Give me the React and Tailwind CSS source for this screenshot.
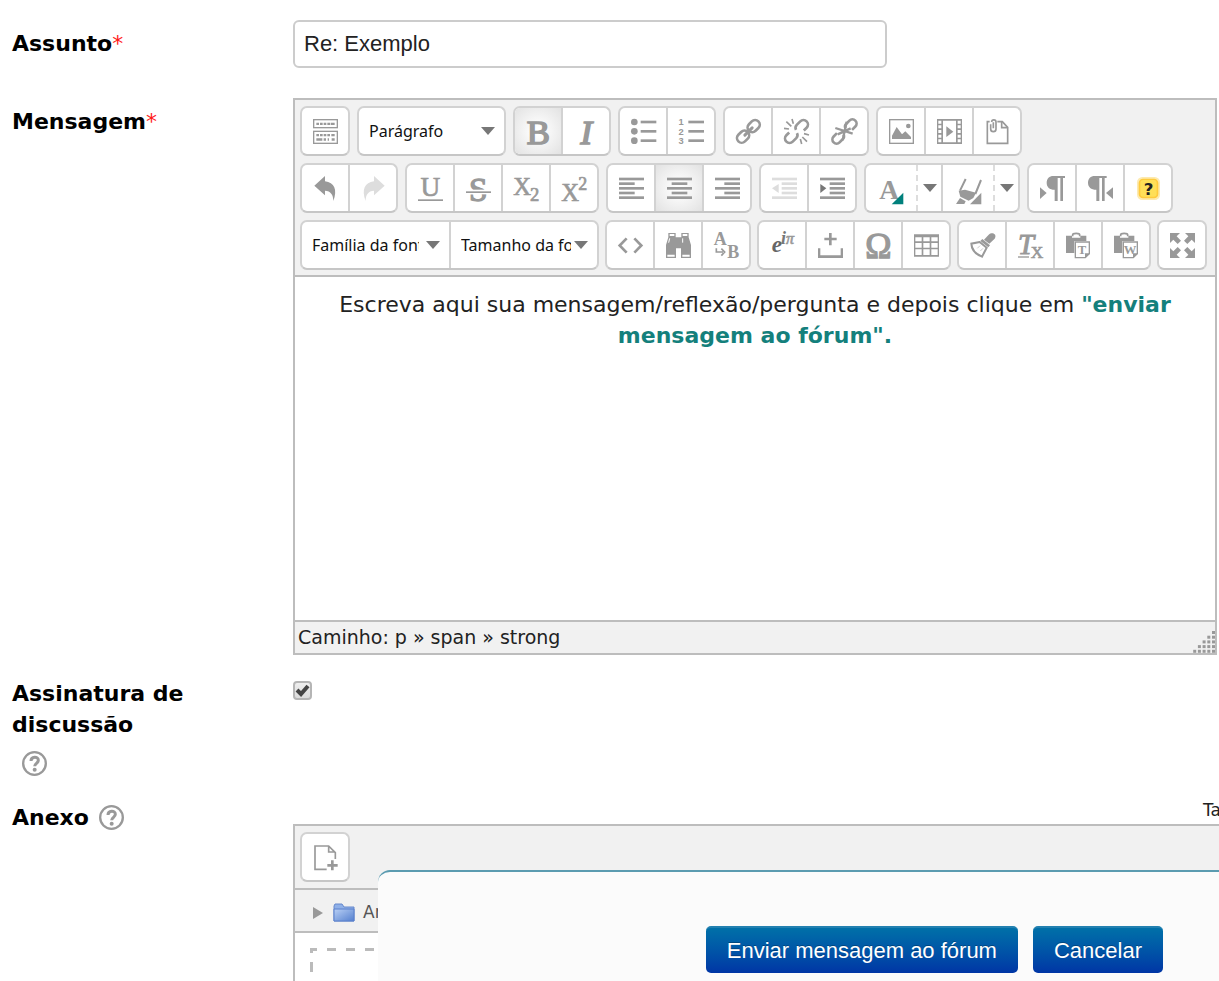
import { useState } from 'react'
import clsx from 'clsx'

const SERIF = '"Liberation Serif", serif'

function Icon({ children, color = '#999', className }) {
  return (
    <svg viewBox="0 0 75 75" className={clsx('w-[25px] h-[25px] shrink-0 overflow-visible', className)} fill={color} stroke="none" aria-hidden="true">
      {children}
    </svg>
  )
}

function Glyph({ x = 37, y, size, bold, italic, anchor = 'middle', fill = '#999', weight = 2, children }) {
  return (
    <text x={x} y={y} fontSize={size} fontFamily={SERIF} fontWeight={bold ? 700 : 400} fontStyle={italic ? 'italic' : 'normal'} textAnchor={anchor} fill={fill} stroke={fill} strokeWidth={bold ? 0 : weight}>
      {children}
    </text>
  )
}

// horizontal text lines: [x, width] for each row
function Lines({ rows }) {
  return rows.map(([x, w], i) => <rect key={i} x={x} y={5 + i * 14} width={w} height="8" />)
}

function Caret() {
  return (
    <svg viewBox="0 0 14 8" className="w-[14px] h-2 shrink-0" fill="#777" aria-hidden="true">
      <path d="M0 0H14L7 8Z" />
    </svg>
  )
}

const icons = {
  toggle: (
    <Icon>
      <g fill="none" stroke="#999" strokeWidth="4">
        <rect x="2" y="2" width="71" height="24" />
        <rect x="2" y="37" width="71" height="36" />
      </g>
      <path d="M10 11h8v7h-8zM21 11h8v7h-8zM32 11h8v7h-8zM43 11h8v7h-8zM53 11h12v7H53zM10 45h8v7h-8zM21 45h8v7h-8zM32 45h8v7h-8zM43 45h8v7h-8zM55 45h10v7H55zM10 58h18v7H10zM32 58h7v7h-7zM44 58h4v7h-4zM56 58h9v7h-9z" />
    </Icon>
  ),
  bold: <Icon><Glyph y="75" size="104" weight={5}>B</Glyph></Icon>,
  italic: <Icon><Glyph y="75" size="104" italic weight={5}>I</Glyph></Icon>,
  bullets: (
    <Icon>
      {[9, 37, 65].map((y) => (
        <g key={y}>
          <circle cx="10" cy={y} r="10" />
          <rect x="29" y={y - 4} width="47" height="8" />
        </g>
      ))}
    </Icon>
  ),
  numbers: (
    <Icon>
      {[9, 37, 65].map((y, i) => (
        <g key={y}>
          <text x="6" y={y + 10} fontSize="28" fontWeight="700" fontFamily='"Liberation Sans", sans-serif' textAnchor="middle">{i + 1}</text>
          <rect x="28" y={y - 4} width="47" height="8" />
        </g>
      ))}
    </Icon>
  ),
  link: (
    <Icon>
      <g fill="none" stroke="#999" strokeWidth="8" transform="rotate(-45 37.5 37.5)">
        <rect x="-5" y="23" width="40" height="28" rx="14" />
        <rect x="40" y="23" width="40" height="28" rx="14" />
        <path d="M22 37.500H53" strokeLinecap="round" strokeWidth="9" />
      </g>
    </Icon>
  ),
  unlink: (
    <Icon>
      <g fill="none" stroke="#999" strokeWidth="8" transform="rotate(-45 37.5 37.5)">
        <path d="M20 24H8a13.500 13.500 0 0 0 0 27H23a13 13 0 0 0 12 -9" />
        <path d="M55 51H67a13.500 13.500 0 0 0 0 -27H52a13 13 0 0 0 -12 9" />
      </g>
      <path d="M24 0L28 14M7 8L22 22M0 28L15 30M49 60L53 75M55 54L69 68M60 44L75 48" fill="none" stroke="#999" strokeWidth="5" />
    </Icon>
  ),
  noAutolink: (
    <Icon>
      <g fill="none" stroke="#999" strokeWidth="8" transform="rotate(-45 37.5 37.5)">
        <path d="M18 25H4a12 12 0 0 0 0 25H18a12 12 0 0 0 11 -8" />
        <path d="M57 50H71a12 12 0 0 0 0 -25H57a12 12 0 0 0 -11 8" />
      </g>
      <path d="M10 27L62 44M44 8L32 64M17 46L56 28" fill="none" stroke="#999" strokeWidth="7" />
    </Icon>
  ),
  image: (
    <Icon>
      <rect x="2" y="2" width="71" height="71" fill="none" stroke="#999" strokeWidth="4" />
      <path d="M9 60V50L23 24L39 46L49 37L66 54V60Z" />
      <circle cx="58" cy="21" r="7" />
    </Icon>
  ),
  movie: (
    <Icon>
      <path fillRule="evenodd" d="M0 0H75V75H0ZM4 5V14H13V5ZM4 19V28H13V19ZM4 33V42H13V33ZM4 47V56H13V47ZM4 61V70H13V61ZM62 5V14H71V5ZM62 19V28H71V19ZM62 33V42H71V33ZM62 47V56H71V47ZM62 61V70H71V61ZM18 5V70H57V5Z" />
      <path d="M28 22L49 38L28 54Z" />
    </Icon>
  ),
  attach: (
    <Icon>
      <g fill="none" stroke="#999" strokeWidth="5">
        <path d="M14 8H7V73H68V25L52 8H37" />
        <path d="M50 8V26H68" />
        <path d="M17 16V30a8 8 0 0 0 16 0V9a6.500 6.500 0 0 0 -13 0M25 28V10" />
      </g>
    </Icon>
  ),
  undo: <Icon><path d="M4 29L36 0V16C64 19 74 42 61 75C61 56 53 45 36 44V58Z" /></Icon>,
  redo: <Icon color="#ddd"><path d="M71 29L39 0V16C11 19 1 42 14 75C14 56 22 45 39 44V58Z" /></Icon>,
  underline: (
    <Icon>
      <Glyph y="60" size="82">U</Glyph>
      <rect x="0" y="70" width="75" height="5" />
    </Icon>
  ),
  strike: (
    <Icon>
      <Glyph y="74" size="100" weight={4}>S</Glyph>
      <rect x="0" y="41" width="75" height="14" fill="#fff" />
      <rect x="0" y="46" width="75" height="5" />
    </Icon>
  ),
  sub: (
    <Icon>
      <Glyph x="-2" y="57" size="74" anchor="start">X</Glyph>
      <Glyph x="48" y="75" size="56" anchor="start">2</Glyph>
    </Icon>
  ),
  sup: (
    <Icon>
      <Glyph x="-2" y="74" size="74" anchor="start">X</Glyph>
      <Glyph x="49" y="41" size="54" anchor="start">2</Glyph>
    </Icon>
  ),
  left: <Icon><Lines rows={[[0, 75], [0, 47], [0, 75], [0, 47], [0, 75]]} /></Icon>,
  center: <Icon><Lines rows={[[0, 75], [14, 47], [0, 75], [14, 47], [0, 75]]} /></Icon>,
  right: <Icon><Lines rows={[[0, 75], [28, 47], [0, 75], [28, 47], [0, 75]]} /></Icon>,
  outdent: (
    <Icon color="#ddd">
      <Lines rows={[[0, 75], [29, 46], [29, 46], [29, 46], [0, 75]]} />
      <path d="M0 37L20 24V51Z" />
    </Icon>
  ),
  indent: (
    <Icon>
      <Lines rows={[[0, 75], [29, 46], [29, 46], [29, 46], [0, 75]]} />
      <path d="M19 37L1 24V51Z" fill="#777" />
    </Icon>
  ),
  color: (
    <Icon>
      <Glyph x="30" y="69" size="82" bold>A</Glyph>
      <path d="M73 50V85H38Z" fill="#00807c" />
    </Icon>
  ),
  highlight: (
    <Icon>
      <path d="M29 9L12 44M75 12L58 54" fill="none" stroke="#999" strokeWidth="6" />
      <path d="M8 44L27 41L60 50L52 66L38 74L13 62Z" />
      <path d="M0 84L12 66L29 76L25 84Z" />
      <path d="M76 50V85H42Z" />
    </Icon>
  ),
  ltr: (
    <Icon>
      <path d="M40 0H75V6H69V75H61V6H53V75H44V41C28 41 20 33 20 20C20 8 28 0 40 0Z" />
      <path d="M0 34L20 51L0 69Z" />
    </Icon>
  ),
  rtl: (
    <Icon>
      <path d="M20 0H56V6H50V75H42V6H34V75H25V41C9 41 0 33 0 20C0 8 8 0 20 0Z" />
      <path d="M75 34L54 51L75 69Z" />
    </Icon>
  ),
  help: (
    <Icon>
      <rect x="3" y="3" width="69" height="69" rx="16" fill="#fdeab0" />
      <rect x="8" y="8" width="59" height="59" rx="13" fill="#ffcb3d" />
      <rect x="13" y="12" width="49" height="50" rx="9" fill="#ffdf57" />
      <text x="38" y="56" fontSize="50" fontWeight="700" fontFamily='"DejaVu Sans", sans-serif' textAnchor="middle" fill="#222">?</text>
    </Icon>
  ),
  code: <Icon><path d="M26 16L5 37.500L26 59M49 16L70 37.500L49 59" fill="none" stroke="#999" strokeWidth="8" /></Icon>,
  find: (
    <Icon>
      <path fillRule="evenodd" d="M7 0H29V13H46V0H68V13L75 36V75H45V46H30V75H0V36L7 13ZM11 3V9H25V3ZM50 3V9H64V3ZM4 65V71H26V65ZM49 65V71H71V65Z" />
      <path d="M8 29L11 16M50 29V16" stroke="#fff" strokeWidth="3" />
    </Icon>
  ),
  replace: (
    <Icon>
      <Glyph x="19" y="36" size="54" bold>A</Glyph>
      <Glyph x="58" y="75" size="54" bold>B</Glyph>
      <path d="M7 46V57H27M22 47L32 57L22 68" fill="none" stroke="#999" strokeWidth="5" />
    </Icon>
  ),
  equation: (
    <Icon>
      <Glyph x="5" y="57" size="70" bold italic anchor="start" fill="#666">e</Glyph>
      <Glyph x="33" y="33" size="54" bold italic anchor="start" fill="#777">i</Glyph>
      <Glyph x="48" y="33" size="48" italic anchor="start">π</Glyph>
    </Icon>
  ),
  nbsp: <Icon><path d="M33 0H41V14H56V22H41V37H33V22H19V14H33ZM0 46H7V67H68V46H75V75H0Z" /></Icon>,
  omega: <Icon><Glyph y="74" size="106" weight={4}>Ω</Glyph></Icon>,
  table: (
    <Icon>
      <path fillRule="evenodd" d="M0 4H75V71H0ZM4 13V25H23V13ZM28 13V25H47V13ZM52 13V25H71V13ZM4 30V44H23V30ZM28 30V44H47V30ZM52 30V44H71V30ZM4 49V66H23V49ZM28 49V66H47V49ZM52 49V66H71V49Z" />
    </Icon>
  ),
  cleanup: (
    <Icon>
      <path d="M42 20L56 5C68 -5 82 5 74 17L58 32Z" />
      <path d="M37 18L60 37L55 43L31 24Z" />
      <path d="M29 27L4 32C5 50 18 64 36 71L50 44Z" fill="none" stroke="#999" strokeWidth="6" />
      <path d="M22 46L30 38M31 54L39 46" stroke="#ccc" strokeWidth="3" />
    </Icon>
  ),
  removeFormat: (
    <Icon>
      <Glyph x="0" y="62" size="86" italic anchor="start" weight={3}>T</Glyph>
      <Glyph x="38" y="75" size="52" anchor="start">X</Glyph>
      <rect x="0" y="70" width="33" height="4" />
    </Icon>
  ),
  pasteText: <Icon><Paste letter="T" /></Icon>,
  pasteWord: <Icon><Paste letter="W" /></Icon>,
  fullscreen: (
    <Icon>
      <path d="M0 0H30L20 10L33 23L23 33L10 20L0 30ZM75 0V30L65 20L52 33L42 23L55 10L45 0ZM0 75V45L10 55L23 42L33 52L20 65L30 75ZM75 75H45L55 65L42 52L52 42L65 55L75 45Z" />
    </Icon>
  ),
  addFile: (
    <Icon>
      <path d="M41 73H6V3H47L67 23V42M47 3V21H64" fill="none" stroke="#999" strokeWidth="5" />
      <path d="M54 46H62V57H74V65H62V76H54V65H43V57H54Z" />
    </Icon>
  ),
}

function Paste({ letter }) {
  return (
    <>
      <path d="M0 8H18V14H43V8H61V24H25V60H0Z" />
      <path d="M20 10V5C20 0 41 0 41 5V10" fill="none" stroke="#999" strokeWidth="5" />
      <path d="M28 27H70V62L58 74H28Z" fill="#fff" stroke="#999" strokeWidth="4" />
      <path d="M57 75V61H71Z" />
      <Glyph x="48" y="62" size="38" bold>{letter}</Glyph>
    </>
  )
}

function Group({ children }) {
  return (
    <div className="flex h-[50px] shrink-0 overflow-hidden rounded-[7px] border-2 border-[#d2d2d2] border-b-[#c6c6c6] bg-white">
      {children}
    </div>
  )
}

function ToolButton({ name, label, active, disabled }) {
  return (
    <button
      type="button"
      title={label}
      aria-label={label}
      aria-pressed={active}
      disabled={disabled}
      className={clsx(
        'box-content flex w-[46px] items-center justify-center border-l-2 border-[#d2d2d2] first:border-l-0',
        active && 'bg-[radial-gradient(circle,#ffffff_10%,#e2e2e2_100%)]'
      )}
    >
      {icons[name]}
    </button>
  )
}

function SplitButton({ name, label }) {
  return (
    <>
      <button type="button" aria-label={label} className="box-content flex w-[50px] items-center justify-center border-l-2 border-[#d2d2d2] first:border-l-0">
        {icons[name]}
      </button>
      <button type="button" aria-label={`${label}: opções`} className="flex w-[25px] items-center justify-center border-l-2 border-dashed border-[#ddd]">
        <Caret />
      </button>
    </>
  )
}

function ToolSelect({ label, className, selectClass }) {
  return (
    <div className={clsx('relative flex', className)}>
      <select aria-label={label} className={clsx('w-full appearance-none overflow-hidden bg-transparent pl-[10px] font-["Noto_Sans",sans-serif] text-[16px] text-[#111] outline-none', selectClass)}>
        <option>{label}</option>
      </select>
      <span className="pointer-events-none absolute inset-y-0 right-[9px] flex items-center">
        <Caret />
      </span>
    </div>
  )
}

function HelpIcon({ label, className }) {
  return (
    <button type="button" aria-label={label} className={clsx('shrink-0', className)}>
      <Icon>
        <circle cx="37.500" cy="37.500" r="34" fill="none" stroke="#999" strokeWidth="7" />
        <path d="M27 30C27 15 49 15 49 28C49 37 38 37 38 46" fill="none" stroke="#999" strokeWidth="9" />
        <circle cx="38" cy="56" r="6" />
      </Icon>
    </button>
  )
}

function Row({ label, children }) {
  return (
    <div className="grid grid-cols-[281px_minmax(0,1fr)]">
      <div className="w-[220px] pt-2 text-[22px] leading-[31px] font-bold">{label}</div>
      <div className="min-w-0">{children}</div>
    </div>
  )
}

const Required = () => <span className="font-normal text-[#ff1a1a]">*</span>

function Toolbar() {
  return (
    <div className="flex flex-col gap-[7px] border-b-2 border-[#bdbdbd] bg-[#f1f1f1] pt-[6px] pb-[5px] pl-[5px]">
      <div className="flex gap-[7px]">
        <Group><ToolButton name="toggle" label="Alternar barra de ferramentas" /></Group>
        <Group><ToolSelect label="Parágrafo" className="w-[145px]" selectClass="pr-[24px]" /></Group>
        <Group>
          <ToolButton name="bold" label="Negrito" active />
          <ToolButton name="italic" label="Itálico" />
        </Group>
        <Group>
          <ToolButton name="bullets" label="Lista não ordenada" />
          <ToolButton name="numbers" label="Lista ordenada" />
        </Group>
        <Group>
          <ToolButton name="link" label="Inserir link" />
          <ToolButton name="unlink" label="Remover link" />
          <ToolButton name="noAutolink" label="Impedir link automático" />
        </Group>
        <Group>
          <ToolButton name="image" label="Inserir imagem" />
          <ToolButton name="movie" label="Inserir mídia" />
          <ToolButton name="attach" label="Gerenciar arquivos" />
        </Group>
      </div>

      <div className="flex gap-[7px]">
        <Group>
          <ToolButton name="undo" label="Desfazer" />
          <ToolButton name="redo" label="Refazer" disabled />
        </Group>
        <Group>
          <ToolButton name="underline" label="Sublinhado" />
          <ToolButton name="strike" label="Riscado" />
          <ToolButton name="sub" label="Subscrito" />
          <ToolButton name="sup" label="Sobrescrito" />
        </Group>
        <Group>
          <ToolButton name="left" label="Alinhar à esquerda" />
          <ToolButton name="center" label="Centralizar" active />
          <ToolButton name="right" label="Alinhar à direita" />
        </Group>
        <Group>
          <ToolButton name="outdent" label="Diminuir recuo" disabled />
          <ToolButton name="indent" label="Aumentar recuo" />
        </Group>
        <Group>
          <SplitButton name="color" label="Cor do texto" />
          <SplitButton name="highlight" label="Cor de fundo" />
        </Group>
        <Group>
          <ToolButton name="ltr" label="Da esquerda para a direita" />
          <ToolButton name="rtl" label="Da direita para a esquerda" />
          <ToolButton name="help" label="Ajuda" />
        </Group>
      </div>

      <div className="flex gap-[6px]">
        <Group>
          <ToolSelect label="Família da fonte" className="w-[147px]" selectClass="mr-[30px]" />
          <ToolSelect label="Tamanho da fonte" className="w-[148px] border-l-2 border-[#d2d2d2]" selectClass="mr-[26px]" />
        </Group>
        <Group>
          <ToolButton name="code" label="Editar HTML" />
          <ToolButton name="find" label="Localizar" />
          <ToolButton name="replace" label="Localizar e substituir" />
        </Group>
        <Group>
          <ToolButton name="equation" label="Equação" />
          <ToolButton name="nbsp" label="Espaço não separável" />
          <ToolButton name="omega" label="Caractere especial" />
          <ToolButton name="table" label="Tabela" />
        </Group>
        <Group>
          <ToolButton name="cleanup" label="Limpar código" />
          <ToolButton name="removeFormat" label="Remover formatação" />
          <ToolButton name="pasteText" label="Colar como texto" />
          <ToolButton name="pasteWord" label="Colar do Word" />
        </Group>
        <Group><ToolButton name="fullscreen" label="Tela cheia" /></Group>
      </div>
    </div>
  )
}

function Editor() {
  return (
    <div className="mr-[2px] border-2 border-[#bdbdbd]">
      <Toolbar />
      <div
        role="textbox"
        aria-label="Mensagem"
        contentEditable
        suppressContentEditableWarning
        className="min-h-[343px] bg-white px-4 pt-3 text-center text-[22px] leading-[31px] text-[#222] outline-none"
      >
        <p>
          Escreva aqui sua mensagem/reflexão/pergunta e depois clique em{' '}
          <strong className="text-[#14807c]">"enviar mensagem ao fórum".</strong>
        </p>
      </div>
      <div className="flex h-[33px] items-end justify-between border-t-2 border-[#bdbdbd] bg-[#f1f1f1]">
        <div className="pl-[3px] text-[19px] leading-[32px] text-[#222]">Caminho: p » span » strong</div>
        <svg viewBox="0 0 22 22" className="h-[22px] w-[22px]" fill="#999" aria-hidden="true">
          {[0, 1, 2, 3, 4].map((row) =>
            Array.from({ length: row + 1 }, (_, i) => (
              <rect key={`${row}-${i}`} x={19 - i * 4.7} y={row * 4.7} width="3" height="3" />
            ))
          )}
        </svg>
      </div>
    </div>
  )
}

function FileManager() {
  return (
    <div>
      <div className="overflow-hidden pt-1 pb-[2px] text-right">
        <span className="inline-block w-4 text-left align-top text-[17px] leading-6 whitespace-nowrap text-[#222]">Ta</span>
      </div>
      <div className="border-t-2 border-l-2 border-[#bdbdbd]">
        <div className="flex border-b-2 border-[#bdbdbd] bg-[#f1f1f1] py-[6px] pl-[5px]">
          <Group><ToolButton name="addFile" label="Adicionar arquivo" /></Group>
        </div>
        <div className="flex h-[43px] items-center border-b-2 border-[#bdbdbd] bg-[#f1f1f1] pt-1 pl-[18px]">
          <svg viewBox="0 0 10 12" className="h-3 w-[10px]" fill="#999" aria-hidden="true">
            <path d="M0 0L10 6L0 12Z" />
          </svg>
          <svg viewBox="0 0 22 19" className="ml-[10px] h-[19px] w-[22px]" aria-hidden="true">
            <defs>
              <linearGradient id="folder" x1="0" y1="0" x2="1" y2="1">
                <stop offset="0" stopColor="#b9d0f5" />
                <stop offset="1" stopColor="#5580cf" />
              </linearGradient>
            </defs>
            <path d="M1 3L2 1H9L11 4H21V18H1Z" fill="#8fb0e8" stroke="#6688cc" />
            <path d="M1 6H21V18H1Z" fill="url(#folder)" stroke="#5b80cc" />
          </svg>
          <span className="ml-2 text-[17px] text-[#555]">Ar</span>
        </div>
        <div className="h-[180px] bg-white pt-[15px] pl-[15px]">
          <div className="h-[3px] bg-[repeating-linear-gradient(90deg,#bbb_0_7px,transparent_7px_17px,#bbb_17px_19px)]" />
          <div className="h-full w-[3px] bg-[repeating-linear-gradient(180deg,#bbb_0_2px,transparent_2px_11px,#bbb_11px_19px)]" />
        </div>
      </div>
    </div>
  )
}

function ActionButton({ children, type = 'button' }) {
  return (
    <button
      type={type}
      className="h-[47px] rounded-[5px] border-t-2 border-[#2280b0] bg-linear-to-b from-[#0070a8] to-[#0035a5] px-[21px] pb-px font-['Liberation_Sans',sans-serif] text-[22px] text-white [text-shadow:0_-1px_0_rgba(0,0,0,0.25)]"
    >
      {children}
    </button>
  )
}

export default function App() {
  const [subject, setSubject] = useState('Re: Exemplo')
  const [subscribed, setSubscribed] = useState(true)

  return (
    <form onSubmit={(e) => e.preventDefault()} className="h-screen overflow-hidden bg-white pt-5 pl-3 font-['DejaVu_Sans',Verdana,sans-serif] text-black">
      <div className="flex flex-col">
        <Row label={<label htmlFor="subject">Assunto<Required /></label>}>
          <input
            id="subject"
            type="text"
            value={subject}
            onChange={(e) => setSubject(e.target.value)}
            className="h-12 w-full max-w-[594px] rounded-[6px] border-2 border-[#ccc] bg-white px-[9px] font-['Liberation_Sans',sans-serif] text-[22px] text-[#222] outline-none"
          />
        </Row>

        <div className="mt-[30px]">
          <Row label={<>Mensagem<Required /></>}>
            <Editor />
          </Row>
        </div>

        <div className="mt-[15px]">
          <Row
            label={
              <>
                <label htmlFor="subscribe">Assinatura de discussão</label>
                <div className="mt-2 flex h-[31px] items-center pl-[10px]">
                  <HelpIcon label="Ajuda com Assinatura de discussão" className="h-[25px]" />
                </div>
              </>
            }
          >
            <div className="relative mt-[11px] h-[19px] w-[19px]">
              <input
                id="subscribe"
                type="checkbox"
                checked={subscribed}
                onChange={(e) => setSubscribed(e.target.checked)}
                className="peer block h-[19px] w-[19px] appearance-none rounded-[4px] border-2 border-[#b5b5b5] bg-linear-to-b from-[#eee] to-[#dcdcdc]"
              />
              <svg viewBox="0 0 19 19" className="pointer-events-none absolute inset-0 hidden peer-checked:block" fill="none" stroke="#444" strokeWidth="4" aria-hidden="true">
                <path d="M4 9L8 13L15 5" />
              </svg>
            </div>
          </Row>
        </div>

        <div className="mt-[15px]">
          <Row
            label={
              <div className="flex items-center gap-[10px]">
                Anexo
                <HelpIcon label="Ajuda com Anexo" className="h-[25px]" />
              </div>
            }
          >
            <FileManager />
          </Row>
        </div>
      </div>

      <div className="fixed right-0 bottom-0 left-[378px] flex justify-end gap-[15px] rounded-tl-[12px] border-t-2 border-[#5b9bb0] bg-[#fbfbfb] pt-[54px] pr-14 pb-2">
        <ActionButton type="submit">Enviar mensagem ao fórum</ActionButton>
        <ActionButton>Cancelar</ActionButton>
      </div>
    </form>
  )
}
